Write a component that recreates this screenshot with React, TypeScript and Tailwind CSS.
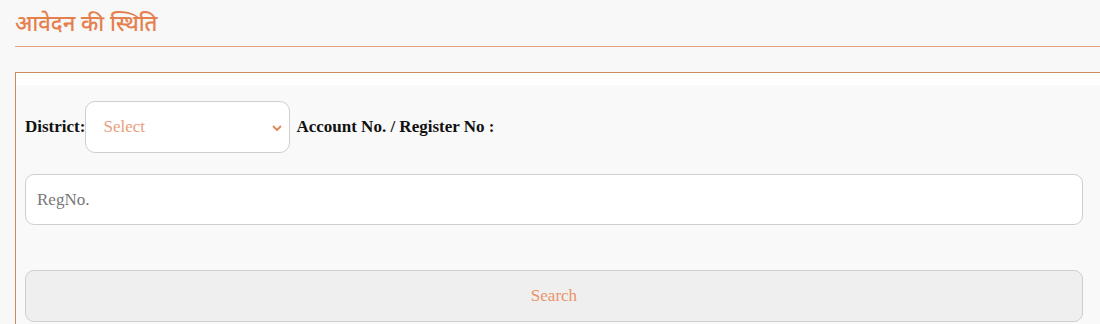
import React from "react";

export default function App() {
  return (
    <div className="min-h-screen w-full overflow-hidden bg-[#f8f8f8]">
      {/* Heading */}
      <div className="pl-[15px] pt-[7px]">
        <h2 className="border-b border-[#e6a47c] pb-[8px] text-[22px] leading-[31px] font-medium text-[#e57f4e] [font-family:'Noto_Sans',sans-serif]">
          आवेदन की स्थिति
        </h2>
      </div>

      {/* Status form */}
      <div className="mt-[25px] ml-[15px] w-[1100px] border border-[#c98d62] bg-white pt-[12px] [font-family:'Liberation_Serif',serif]">
        <div className="bg-[#f9f9f9] pl-[9px] pt-[16px] pb-[10px]">
          <div className="flex items-center">
            <label className="text-[17px] font-bold text-[#111]">District:</label>
            <div className="relative">
              <select className="h-[52px] w-[205px] appearance-none rounded-[10px] border border-[#cfcfcf] bg-white pl-[17px] text-[17px] text-[#e9a07c] outline-none">
                <option>Select</option>
              </select>
              <svg
                className="pointer-events-none absolute right-[8px] top-[23px] h-[8px] w-[10px]"
                viewBox="0 0 10 8"
                fill="none"
                stroke="#e2875a"
                strokeWidth="1.8"
                strokeLinecap="round"
                strokeLinejoin="round"
              >
                <path d="M1.5 2.5 L5 6 L8.5 2.5" />
              </svg>
            </div>
            <label className="ml-[6px] text-[17px] font-bold text-[#111]">Account No. / Register No :</label>
          </div>

          <input
            className="mt-[21px] block h-[51px] w-[1058px] rounded-[9px] border border-[#cfcfcf] bg-white px-[11px] text-[17px] text-[#333] outline-none placeholder:text-[#777]"
            placeholder="RegNo."
          />

          <button className="mt-[45px] block h-[52px] w-[1058px] rounded-[9px] border border-[#cfcfcf] bg-[#efefef] text-[17px] text-[#e9946a]">
            Search
          </button>
        </div>
      </div>
    </div>
  );
}
